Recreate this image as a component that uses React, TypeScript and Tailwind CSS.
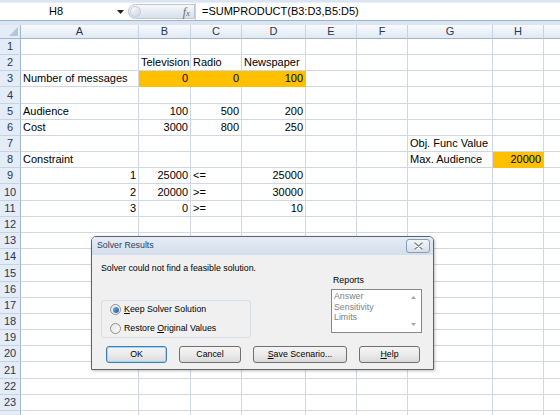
import clsx from 'clsx';

type Col = { key: string; w: string };
type CellData = { v: string; right?: boolean; fill?: boolean };

const COLS: Col[] = [
    { key: 'A', w: 'w-[118px]' },
    { key: 'B', w: 'w-[52px]' },
    { key: 'C', w: 'w-[51px]' },
    { key: 'D', w: 'w-[64px]' },
    { key: 'E', w: 'w-[51px]' },
    { key: 'F', w: 'w-[51px]' },
    { key: 'G', w: 'w-[85px]' },
    { key: 'H', w: 'w-[51px]' },
    { key: 'I', w: 'w-[60px]' },
];

// row heights follow the screenshot: most rows 16px, a few 17px
const TALL = [4, 10, 15, 21];
const ROWS = Array.from({ length: 24 }, (_, i) => i + 1);

const CELLS: Record<string, CellData> = {
    B2: { v: 'Television' },
    C2: { v: 'Radio' },
    D2: { v: 'Newspaper' },
    A3: { v: 'Number of messages' },
    B3: { v: '0', right: true, fill: true },
    C3: { v: '0', right: true, fill: true },
    D3: { v: '100', right: true, fill: true },
    A5: { v: 'Audience' },
    B5: { v: '100', right: true },
    C5: { v: '500', right: true },
    D5: { v: '200', right: true },
    A6: { v: 'Cost' },
    B6: { v: '3000', right: true },
    C6: { v: '800', right: true },
    D6: { v: '250', right: true },
    G7: { v: 'Obj. Func Value' },
    A8: { v: 'Constraint' },
    G8: { v: 'Max. Audience' },
    H8: { v: '20000', right: true, fill: true },
    A9: { v: '1', right: true },
    B9: { v: '25000', right: true },
    C9: { v: '<=' },
    D9: { v: '25000', right: true },
    A10: { v: '2', right: true },
    B10: { v: '20000', right: true },
    C10: { v: '>=' },
    D10: { v: '30000', right: true },
    A11: { v: '3', right: true },
    B11: { v: '0', right: true },
    C11: { v: '>=' },
    D11: { v: '10', right: true },
};

function FormulaBar() {
    return (
        <div className="h-[25px] bg-[#dbe5f1] pt-[2px]">
            <div className="flex h-[19px] items-center border-y border-t-[#e8eef7] border-b-[#9fb3cc] bg-white">
                <div className="flex w-[112px] items-center justify-center text-[11px] text-black">H8</div>
                <div className="flex w-[16px] items-center justify-center">
                    <svg width="7" height="4" viewBox="0 0 7 4">
                        <path d="M0 0h7L3.5 4z" fill="#222" />
                    </svg>
                </div>
                <div className="flex h-[15px] w-[67px] items-center justify-between rounded-l-[8px] border border-[#b9c7d9] bg-gradient-to-b from-[#f6f8fb] to-[#d8e0eb] pl-[1px] pr-[4px]">
                    <div className="h-[11px] w-[11px] rounded-full border border-[#c3ccd8] bg-gradient-to-br from-white to-[#cdd5df]" />
                    <span className="font-['Liberation_Serif',serif] text-[12px] italic text-[#6b6b6b]">
                        f<span className="text-[9px]">x</span>
                    </span>
                </div>
                <div className="flex h-full flex-1 items-center border-l border-[#c9d3e0] pl-[6px] text-[11px] text-black">
                    =SUMPRODUCT(B3:D3,B5:D5)
                </div>
            </div>
        </div>
    );
}

function HeaderRow() {
    return (
        <div className="flex h-[14px]">
            <div className="relative w-[21px] flex-none border-r border-b border-[#9eb6ce] bg-[#e4ecf7]">
                <svg className="absolute right-[2px] bottom-[2px]" width="9" height="9" viewBox="0 0 9 9">
                    <path d="M9 0v9H0z" fill="#b6c6da" />
                </svg>
            </div>
            {COLS.map((c) => (
                <div
                    key={c.key}
                    className={clsx(
                        c.w,
                        'flex flex-none items-center justify-center border-r border-b border-r-[#c5d3e3] border-b-[#9eb6ce] bg-gradient-to-b from-[#f8fafd] to-[#e1e9f4] text-[11px] text-[#27384f]'
                    )}
                >
                    {c.key !== 'I' && c.key}
                </div>
            ))}
        </div>
    );
}

function SheetRow({ row }: { row: number }) {
    return (
        <div className={clsx('flex', TALL.includes(row) ? 'h-[17px]' : 'h-[16px]')}>
            <div className="flex w-[21px] flex-none items-center justify-center border-r border-b border-r-[#9eb6ce] border-b-[#c5d3e3] bg-[#e4ecf7] text-[11px] text-[#27384f]">
                {row < 24 && row}
            </div>
            {COLS.map((c) => {
                const d = CELLS[c.key + row];
                return (
                    <div
                        key={c.key}
                        className={clsx(
                            c.w,
                            'flex flex-none items-center overflow-hidden whitespace-nowrap border-r border-b text-[11px] text-black',
                            d?.fill ? 'border-[#ffc000] bg-[#ffc000]' : 'border-[#d0d7e5]',
                            d?.right ? 'justify-end px-[2px]' : 'pl-[2px]'
                        )}
                    >
                        {d?.v}
                    </div>
                );
            })}
        </div>
    );
}

function Radio({ on }: { on?: boolean }) {
    return (
        <div className="flex h-[11px] w-[11px] flex-none items-center justify-center rounded-full border border-[#8e8f8f] bg-gradient-to-br from-[#e6e6e6] to-[#fbfbfb]">
            {on && <div className="h-[6px] w-[6px] rounded-full bg-gradient-to-br from-[#6fb0e8] to-[#1a5a9e]" />}
        </div>
    );
}

function Btn({ children, primary, w }: { children: React.ReactNode; primary?: boolean; w: string }) {
    return (
        <div
            className={clsx(
                w,
                'flex h-[17px] flex-none items-center justify-center rounded-[3px] border bg-gradient-to-b from-[#f4f4f4] via-[#ebebeb] to-[#d9d9d9] text-[8.8px] text-black',
                primary ? 'border-[#3c7fb1] shadow-[inset_0_0_0_1px_#9fd5f5]' : 'border-[#707070]'
            )}
        >
            {children}
        </div>
    );
}

function SolverDialog() {
    return (
        <div className="absolute top-[236px] left-[91px] flex h-[134px] w-[343px] flex-col overflow-hidden rounded-t-[5px] border border-[#5e6368] bg-[#f0f0f0] font-['Liberation_Sans',Arial,sans-serif] shadow-[1px_1px_3px_rgba(0,0,0,0.25)]">
            <div className="flex h-[18px] flex-none items-center justify-between bg-gradient-to-b from-[#e4ecf6] to-[#d3deeb] pl-[5px] pr-[3px]">
                <span className="text-[8.8px] text-[#2f3d52]">Solver Results</span>
                <div className="flex h-[14px] w-[24px] items-center justify-center rounded-[3px] border border-[#8a9bb1] bg-gradient-to-b from-[#f3f6fa] to-[#d5dee9]">
                    <svg width="9" height="8" viewBox="0 0 9 8">
                        <path d="M1 1l7 6M8 1L1 7" stroke="#ffffff" strokeWidth="3.2" strokeLinecap="round" />
                        <path d="M1 1l7 6M8 1L1 7" stroke="#7e8590" strokeWidth="1.6" strokeLinecap="round" />
                    </svg>
                </div>
            </div>
            <div className="flex flex-1 flex-col px-[9px]">
                <div className="mt-[7px] text-[8.8px] leading-[12px] text-black">Solver could not find a feasible solution.</div>
                <div className="flex">
                    <div className="mt-[26px] flex h-[38px] w-[150px] flex-col justify-center gap-[5px] rounded-[3px] border border-[#d5dfe5] pl-[8px]">
                        <div className="flex items-center gap-[3px] text-[8.8px] text-black">
                            <Radio on />
                            <span>
                                <span className="underline">K</span>eep Solver Solution
                            </span>
                        </div>
                        <div className="flex items-center gap-[3px] text-[8.8px] text-black">
                            <Radio />
                            <span>
                                Restore <span className="underline">O</span>riginal Values
                            </span>
                        </div>
                    </div>
                    <div className="ml-[80px] flex flex-col">
                        <div className="h-[12px] pl-[2px] text-[8.8px] leading-[12px] text-black">Reports</div>
                        <div className="mt-[3px] flex h-[44px] w-[91px] border border-[#828790] bg-white">
                            <div className="flex flex-1 flex-col pt-[1px] pl-[2px] text-[8.8px] leading-[10.5px] text-[#7a7f88]">
                                <span>Answer</span>
                                <span>Sensitivity</span>
                                <span>Limits</span>
                            </div>
                            <div className="flex w-[15px] flex-col items-center justify-between py-[6px]">
                                <svg width="5" height="3" viewBox="0 0 5 3">
                                    <path d="M0 3h5L2.5 0z" fill="#a7a7a7" />
                                </svg>
                                <svg width="5" height="3" viewBox="0 0 5 3">
                                    <path d="M0 0h5L2.5 3z" fill="#a7a7a7" />
                                </svg>
                            </div>
                        </div>
                    </div>
                </div>
                <div className="mt-[8px] flex gap-[12px] pl-[5px]">
                    <Btn primary w="w-[61px]">OK</Btn>
                    <Btn w="w-[62px]">Cancel</Btn>
                    <Btn w="w-[94px]">
                        <span className="underline">S</span>ave Scenario...
                    </Btn>
                    <Btn w="w-[61px]">
                        <span className="underline">H</span>elp
                    </Btn>
                </div>
            </div>
        </div>
    );
}

export default function App() {
    return (
        <div className="relative h-[415px] w-[560px] overflow-hidden bg-white font-['Liberation_Sans',Arial,sans-serif]">
            <FormulaBar />
            <HeaderRow />
            {ROWS.map((r) => (
                <SheetRow key={r} row={r} />
            ))}
            <SolverDialog />
        </div>
    );
}
